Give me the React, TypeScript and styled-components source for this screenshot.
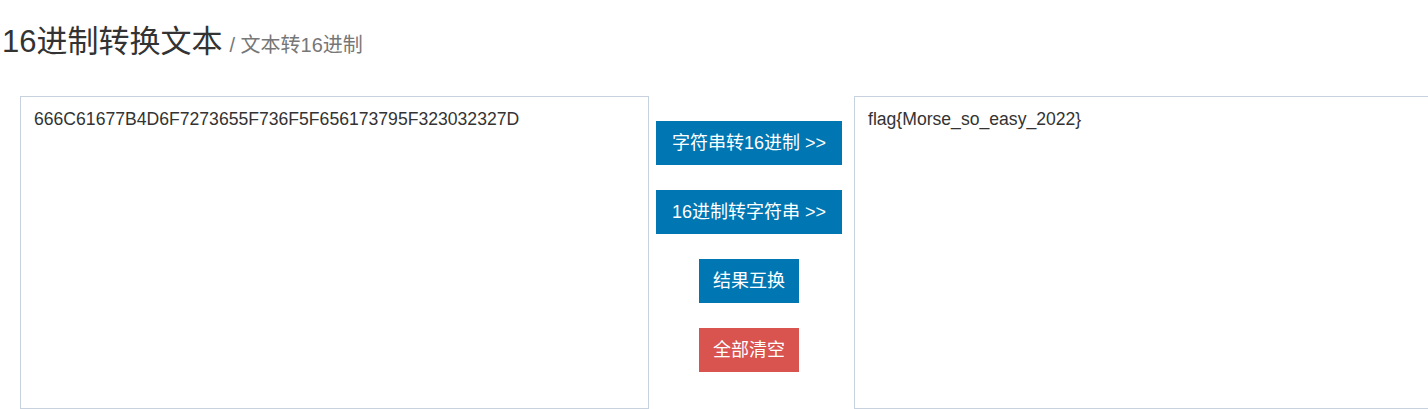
import React, { useState } from "react";
import styled, { createGlobalStyle } from "styled-components";

const GlobalStyle = createGlobalStyle`
  html, body {
    margin: 0;
    padding: 0;
    background: #ffffff;
    overflow: hidden;
  }
  body {
    font-family: "Liberation Sans", Arial, "Noto Sans CJK SC", sans-serif;
    color: #333333;
  }
`;

const Page = styled.div`
  width: 1428px;
  height: 409px;
  overflow: hidden;
`;

const TitleBar = styled.h1`
  margin: 25px 0 0 0;
  padding: 0 0 0 2px;
  font-weight: normal;
  font-size: 31px;
  line-height: 34px;
  height: 34px;
  color: #333333;
  white-space: nowrap;
  font-family: "Liberation Sans", Arial, "Noto Sans CJK SC", sans-serif;
`;

const SubTitle = styled.small`
  font-size: 20px;
  color: #777777;
  margin-left: 7px;
`;

const Workspace = styled.div`
  display: flex;
  align-items: flex-start;
  margin: 37px 0 0 20px;
`;

const TextBox = styled.textarea`
  box-sizing: border-box;
  flex: 0 0 auto;
  width: 629px;
  height: 313px;
  margin: 0;
  padding: 10px 13px;
  border: 1px solid #c8d2de;
  border-radius: 0;
  background: #ffffff;
  color: #333333;
  font-family: "Liberation Sans", Arial, "Noto Sans CJK SC", sans-serif;
  font-size: 17.6px;
  line-height: 25px;
  resize: none;
  outline: none;
  overflow: hidden;
`;

const ActionColumn = styled.div`
  box-sizing: border-box;
  flex: 0 0 205px;
  width: 205px;
  padding: 25px 5px 0 0;
  display: flex;
  flex-direction: column;
  align-items: center;
  gap: 25px;
`;

const ActionButton = styled.button<{ $danger?: boolean }>`
  box-sizing: border-box;
  height: 44px;
  min-width: 100px;
  padding: 0 ${(p) => (p.$compact ? 14 : 16)}px;
  margin: 0;
  border: none;
  border-radius: 0;
  background: ${(p) => (p.$danger ? "#d9534f" : "#0077b3")};
  color: #ffffff;
  font-family: "Liberation Sans", Arial, "Noto Sans CJK SC", sans-serif;
  font-size: 18px;
  line-height: 44px;
  white-space: nowrap;
  cursor: pointer;
` as any;

const toHex = (s: string) =>
  Array.from(s)
    .map((c) => c.charCodeAt(0).toString(16).toUpperCase().padStart(2, "0"))
    .join("");

const fromHex = (h: string) => {
  const clean = h.replace(/[^0-9a-fA-F]/g, "");
  let out = "";
  for (let i = 0; i + 1 < clean.length; i += 2) {
    out += String.fromCharCode(parseInt(clean.slice(i, i + 2), 16));
  }
  return out;
};

export default function App() {
  const [left, setLeft] = useState("666C61677B4D6F7273655F736F5F656173795F323032327D");
  const [right, setRight] = useState("flag{Morse_so_easy_2022}");

  return (
    <Page>
      <GlobalStyle />
      <TitleBar>
        16进制转换文本<SubTitle>/ 文本转16进制</SubTitle>
      </TitleBar>
      <Workspace>
        <TextBox value={left} onChange={(e: any) => setLeft(e.target.value)} spellCheck={false} />
        <ActionColumn>
          <ActionButton onClick={() => setRight(toHex(left))}>字符串转16进制 &gt;&gt;</ActionButton>
          <ActionButton onClick={() => setRight(fromHex(left))}>16进制转字符串 &gt;&gt;</ActionButton>
          <ActionButton
            $compact
            onClick={() => {
              const l = left;
              setLeft(right);
              setRight(l);
            }}
          >
            结果互换
          </ActionButton>
          <ActionButton
            $compact
            $danger
            onClick={() => {
              setLeft("");
              setRight("");
            }}
          >
            全部清空
          </ActionButton>
        </ActionColumn>
        <TextBox value={right} onChange={(e: any) => setRight(e.target.value)} spellCheck={false} />
      </Workspace>
    </Page>
  );
}
